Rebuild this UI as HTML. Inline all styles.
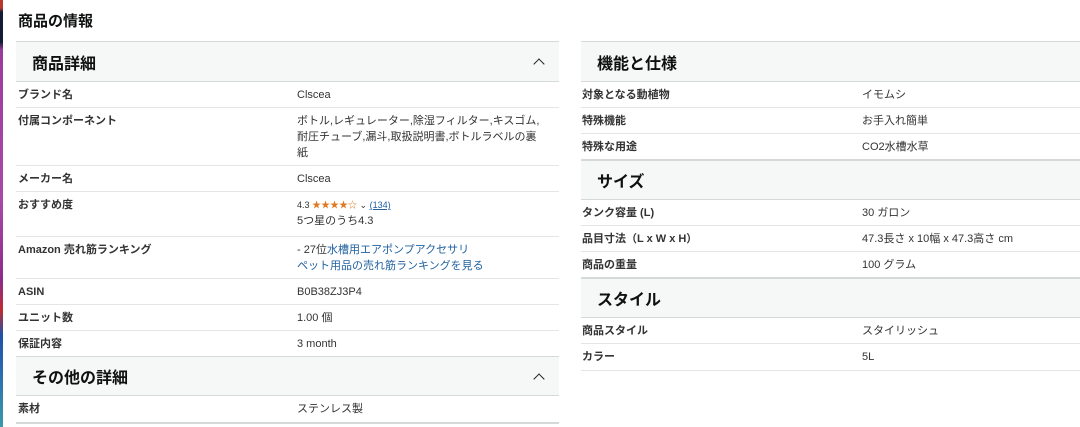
<!DOCTYPE html>
<html><head><meta charset="utf-8">
<style>
*{margin:0;padding:0;box-sizing:border-box}
body{width:1080px;height:427px;overflow:hidden;background:#fff;font-family:"Liberation Sans","Noto Sans CJK JP",sans-serif;color:#0f1111;position:relative}
.strip{position:absolute;left:0;top:0;width:3px;height:427px;background:linear-gradient(#b8392a 0,#b8392a 8px,#141c33 12px,#141c33 42px,#9a3c9e 50px,#a64aaa 200px,#8a2c8c 280px,#c02c30 310px,#2050a8 335px,#2a6ab0 370px,#3a9aa8 427px)}
h1{position:absolute;left:18px;top:10px;font-size:15px;font-weight:bold}
.t{position:absolute;border-top:1px solid #d5d9d9}
.hd{background:#f6f7f7;font-size:16px;font-weight:bold;padding-left:16px;display:flex;align-items:center;border-bottom:1px solid #d5d9d9;position:relative}
.r{display:flex;border-bottom:1px solid #e3e6e6;font-size:11px;line-height:16px;padding-top:5px;padding-left:2px}
.r .k{font-weight:bold;color:#333}
.r .v{color:#333}
a{color:#2162a1;text-decoration:none}
.chev{position:absolute;right:16px;top:18px;width:8px;height:8px;border-left:1.5px solid #222;border-top:1.5px solid #222;transform:rotate(45deg)}
</style></head><body>
<div class="strip"></div>
<h1>商品の情報</h1>
<div class="t" style="left:16px;top:41px;width:543px">
 <div class="hd" style="height:40px">商品詳細<span class="chev"></span></div>
 <div class="r" style="height:26px"><div class="k" style="width:279px">ブランド名</div><div class="v">Clscea</div></div>
 <div class="r" style="height:58px"><div class="k" style="width:279px">付属コンポーネント</div><div class="v" style="width:250px">ボトル,レギュレーター,除湿フィルター,キスゴム,耐圧チューブ,漏斗,取扱説明書,ボトルラベルの裏紙</div></div>
 <div class="r" style="height:26px"><div class="k" style="width:279px">メーカー名</div><div class="v">Clscea</div></div>
 <div class="r" style="height:45px"><div class="k" style="width:279px">おすすめ度</div><div class="v"><span style="font-size:9px">4.3 <span style="color:#de7921;font-size:9px">★★★★☆</span> ⌄ <a style="text-decoration:underline">(134)</a></span><br>5つ星のうち4.3</div></div>
 <div class="r" style="height:42px"><div class="k" style="width:279px">Amazon 売れ筋ランキング</div><div class="v">- 27位<a>水槽用エアポンプアクセサリ</a><br><a>ペット用品の売れ筋ランキングを見る</a></div></div>
 <div class="r" style="height:26px"><div class="k" style="width:279px">ASIN</div><div class="v">B0B38ZJ3P4</div></div>
 <div class="r" style="height:26px"><div class="k" style="width:279px">ユニット数</div><div class="v">1.00 個</div></div>
 <div class="r" style="height:26px;border-bottom:1px solid #d5d9d9"><div class="k" style="width:279px">保証内容</div><div class="v">3 month</div></div>
 <div class="hd" style="height:39px">その他の詳細<span class="chev"></span></div>
 <div class="r" style="height:28px;border-bottom:2px solid #d5d9d9"><div class="k" style="width:279px">素材</div><div class="v">ステンレス製</div></div>
</div>
<div class="t" style="left:581px;top:41px;width:499px">
 <div class="hd" style="height:40px;padding-left:16px">機能と仕様</div>
 <div class="r" style="height:26px;padding-left:1px"><div class="k" style="width:280px">対象となる動植物</div><div class="v">イモムシ</div></div>
 <div class="r" style="height:26px;padding-left:1px"><div class="k" style="width:280px">特殊機能</div><div class="v">お手入れ簡単</div></div>
 <div class="r" style="height:27px;padding-left:1px;border-bottom:2px solid #d5d9d9"><div class="k" style="width:280px">特殊な用途</div><div class="v">CO2水槽水草</div></div>
 <div class="hd" style="height:39px;padding-left:16px">サイズ</div>
 <div class="r" style="height:26px;padding-left:1px"><div class="k" style="width:280px">タンク容量 (L)</div><div class="v">30 ガロン</div></div>
 <div class="r" style="height:26px;padding-left:1px"><div class="k" style="width:280px">品目寸法（L x W x H）</div><div class="v">47.3長さ x 10幅 x 47.3高さ cm</div></div>
 <div class="r" style="height:27px;padding-left:1px;border-bottom:2px solid #d5d9d9"><div class="k" style="width:280px">商品の重量</div><div class="v">100 グラム</div></div>
 <div class="hd" style="height:39px;padding-left:16px">スタイル</div>
 <div class="r" style="height:26px;padding-left:1px"><div class="k" style="width:280px">商品スタイル</div><div class="v">スタイリッシュ</div></div>
 <div class="r" style="height:27px;padding-left:1px"><div class="k" style="width:280px">カラー</div><div class="v">5L</div></div>
</div>
</body></html>
